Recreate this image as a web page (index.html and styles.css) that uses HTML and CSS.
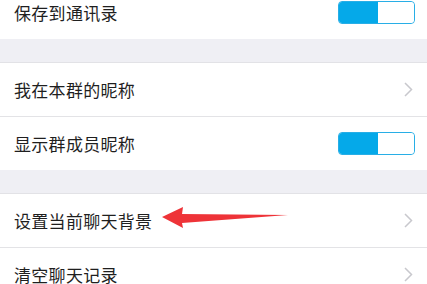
FILE: index.html
```html
<!DOCTYPE html>
<html lang="zh">
<head>
<meta charset="utf-8">
<link rel="stylesheet" href="styles.css">
</head>
<body>
<div class="page">
  <div class="group">
    <div class="row"><span class="label">保存到通讯录</span><span class="toggle"><span class="on"></span><span class="off"></span></span></div>
  </div>
  <div class="gap"></div>
  <div class="group">
    <div class="row"><span class="label">我在本群的昵称</span><svg class="chev" width="9" height="15" viewBox="0 0 9 15"><path d="M1 1 L7.5 7.5 L1 14" fill="none" stroke="#c8c8cd" stroke-width="1.5"/></svg></div>
    <div class="sep"></div>
    <div class="row"><span class="label">显示群成员昵称</span><span class="toggle"><span class="on"></span><span class="off"></span></span></div>
  </div>
  <div class="gap"></div>
  <div class="group">
    <div class="row"><span class="label">设置当前聊天背景</span><svg class="chev" width="9" height="15" viewBox="0 0 9 15"><path d="M1 1 L7.5 7.5 L1 14" fill="none" stroke="#c8c8cd" stroke-width="1.5"/></svg>
      <svg class="arrow" width="130" height="24" viewBox="0 0 130 24"><path d="M0 11 L21 1 L20 8 L126 9 L20 17 L21 22 Z" fill="#ee3338"/></svg>
    </div>
    <div class="sep"></div>
    <div class="row"><span class="label">清空聊天记录</span><svg class="chev" width="9" height="15" viewBox="0 0 9 15"><path d="M1 1 L7.5 7.5 L1 14" fill="none" stroke="#c8c8cd" stroke-width="1.5"/></svg></div>
  </div>
</div>
</body>
</html>
```
FILE: styles.css
```css
html, body { margin: 0; padding: 0; }
body {
  background: #efeff4;
  font-family: "Noto Sans CJK SC", "Liberation Sans", sans-serif;
  overflow: hidden;
  width: 427px;
  height: 284px;
}
.page { margin-top: -14px; }
.group { background: #fff; }
.gap { height: 23px; background: #efeff4; border-bottom: 1px solid #e2e2e6; }
.row {
  position: relative;
  height: 53px;
  display: flex;
  align-items: center;
  justify-content: space-between;
  padding: 0 14px 0 14px;
}
.label { font-size: 17px; color: #1f1f1f; letter-spacing: 0.3px; }
.sep { height: 1px; background: #e3e3e6; }
.toggle {
  display: flex;
  width: 77px;
  height: 23px;
  border-radius: 4px;
  overflow: hidden;
  margin-right: -2px;
  box-sizing: border-box;
  border: 1px solid #28aee6;
}
.toggle .on { width: 39px; background: #05a9e9; }
.toggle .off { flex: 1; background: #fff; border-radius: 3px; }
.chev { margin-right: 0; }
.arrow { position: absolute; left: 162px; top: 12px; }
```
